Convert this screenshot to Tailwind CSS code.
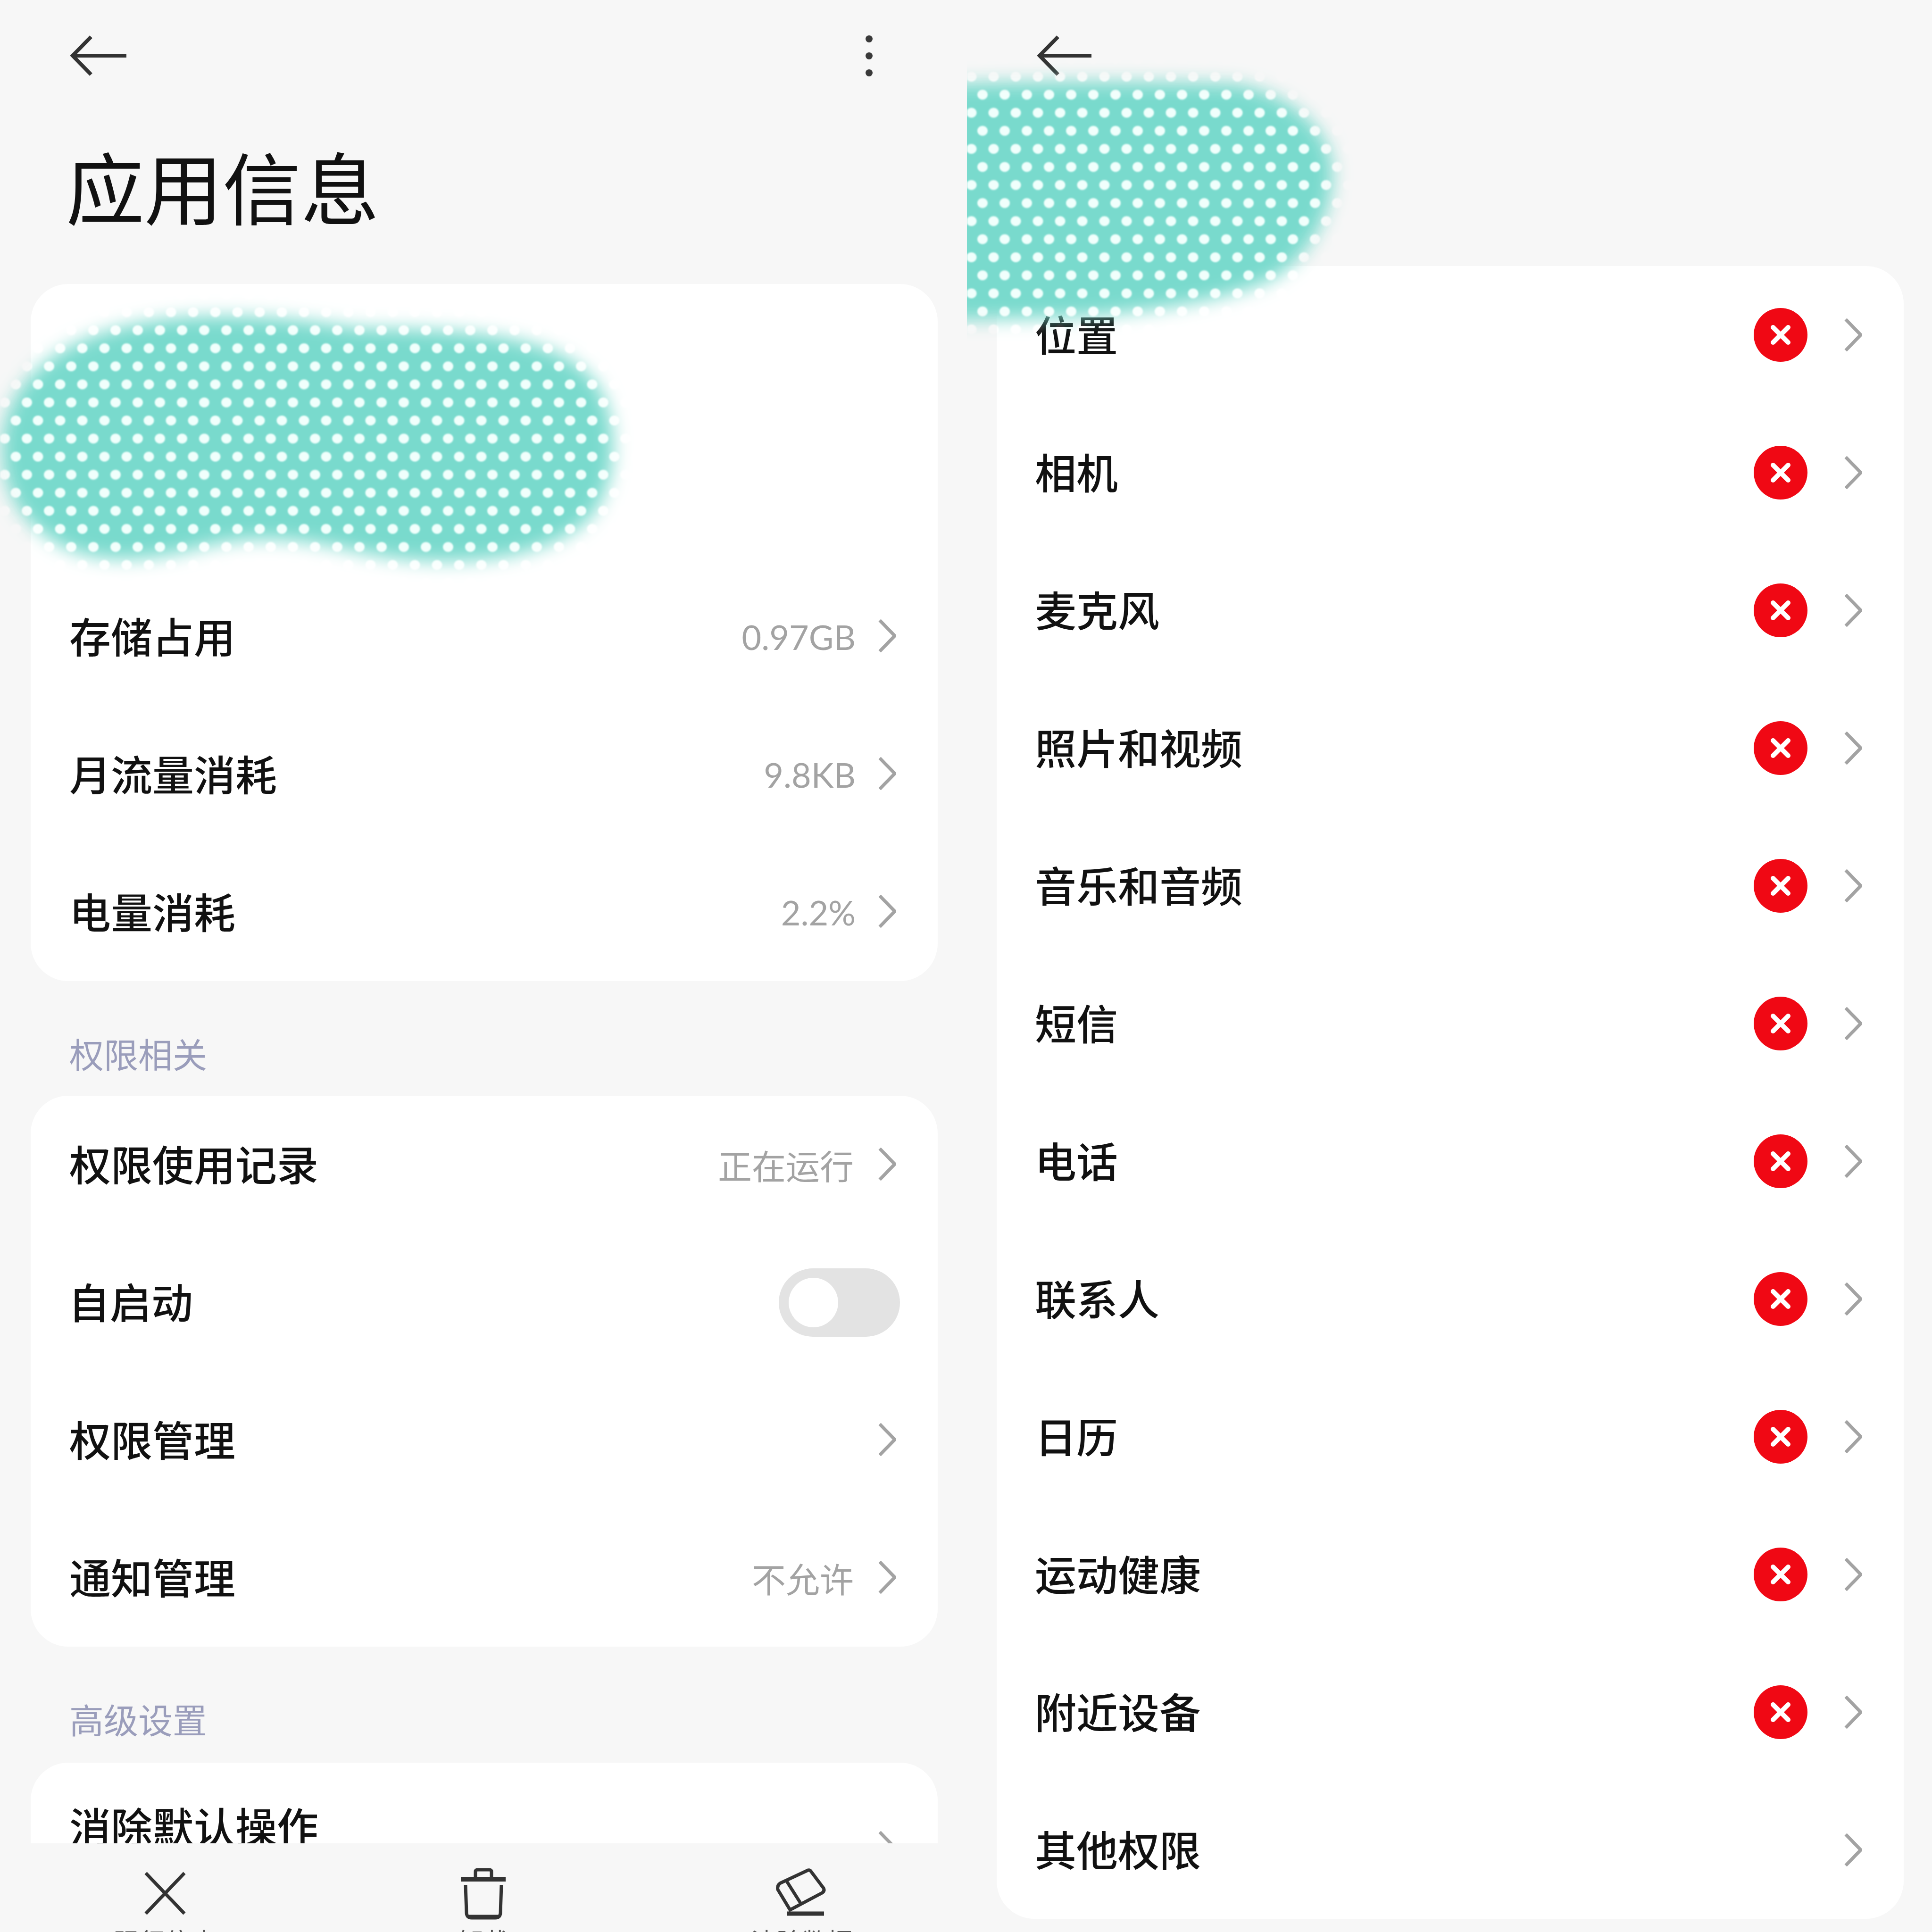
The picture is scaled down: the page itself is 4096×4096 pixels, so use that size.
<!DOCTYPE html>
<html lang="zh-CN">
<head>
<meta charset="utf-8">
<script src="https://cdn.jsdelivr.net/npm/@tailwindcss/browser@4"></script>
<title>应用信息</title>
</head>
<body class="m-0 bg-[#f7f7f7]">
<div class="flex w-[4096px] h-[4096px] overflow-hidden bg-[#f7f7f7] text-[#111] font-['Noto_Sans_CJK_SC','Noto_Sans',sans-serif]">

  <!-- LEFT -->
  <section class="relative w-[2050px] h-[4096px] shrink-0 flex flex-col overflow-hidden">
    <div class="h-[3908px] shrink-0 overflow-hidden">
      <header class="h-[236px] pl-[146px] pr-[200px] flex items-center justify-between">
        <svg class="w-[122px] h-[86px]" viewBox="0 0 122 86" fill="none" stroke="#333" stroke-width="8"><path d="M122 43H8M47 3 8 43l39 40"/></svg>
        <div class="flex flex-col gap-[21px]">
          <span class="block w-[15px] h-[15px] rounded-full bg-[#3a3a3a]"></span>
          <span class="block w-[15px] h-[15px] rounded-full bg-[#3a3a3a]"></span>
          <span class="block w-[15px] h-[15px] rounded-full bg-[#3a3a3a]"></span>
        </div>
      </header>
      <h1 class="h-[366px] pl-[140px] pt-[61px] text-[166px] leading-[190px] font-normal text-[#111]">应用信息</h1>

      <div class="ml-[65px] mr-[62px] bg-white rounded-[80px]">
        <div class="h-[602px]"></div>
        <div class="h-[292px] pl-[84px] pr-[88px] flex items-center justify-between">
          <span class="-mt-[8px] -ml-[2px] text-[88px] font-medium">存储占用</span>
          <div class="flex items-center gap-[48px]"><span class="text-[72px] text-[#a3a3a3] font-['Lato','Noto_Sans_CJK_SC',sans-serif]">0.97GB</span><svg class="w-[38px] h-[70px] -mt-[4px]" viewBox="0 0 38 70" fill="none" stroke="#a3a3a3" stroke-width="7"><path d="M3 2l32 33L3 68"/></svg></div>
        </div>
        <div class="h-[292px] pl-[84px] pr-[88px] flex items-center justify-between">
          <span class="-mt-[8px] -ml-[2px] text-[88px] font-medium">月流量消耗</span>
          <div class="flex items-center gap-[48px]"><span class="text-[72px] text-[#a3a3a3] font-['Lato','Noto_Sans_CJK_SC',sans-serif]">9.8KB</span><svg class="w-[38px] h-[70px] -mt-[4px]" viewBox="0 0 38 70" fill="none" stroke="#a3a3a3" stroke-width="7"><path d="M3 2l32 33L3 68"/></svg></div>
        </div>
        <div class="h-[292px] pl-[84px] pr-[88px] flex items-center justify-between">
          <span class="-mt-[8px] -ml-[2px] text-[88px] font-medium">电量消耗</span>
          <div class="flex items-center gap-[48px]"><span class="text-[72px] text-[#a3a3a3] font-['Lato','Noto_Sans_CJK_SC',sans-serif]">2.2%</span><svg class="w-[38px] h-[70px] -mt-[4px]" viewBox="0 0 38 70" fill="none" stroke="#a3a3a3" stroke-width="7"><path d="M3 2l32 33L3 68"/></svg></div>
        </div>
      </div>

      <div class="h-[243px] pl-[147px] pt-[116px] text-[73px] leading-[73px] text-[#9a9dbb]">权限相关</div>

      <div class="ml-[65px] mr-[62px] bg-white rounded-[80px]">
        <div class="h-[292px] pl-[84px] pr-[88px] flex items-center justify-between">
          <span class="-mt-[8px] -ml-[2px] text-[88px] font-medium">权限使用记录</span>
          <div class="flex items-center gap-[52px]"><span class="text-[72px] text-[#a3a3a3]">正在运行</span><svg class="w-[38px] h-[70px] -mt-[2px]" viewBox="0 0 38 70" fill="none" stroke="#a3a3a3" stroke-width="7"><path d="M3 2l32 33L3 68"/></svg></div>
        </div>
        <div class="h-[292px] pl-[84px] pr-[80px] flex items-center justify-between">
          <span class="-mt-[8px] -ml-[4px] text-[88px] font-medium">自启动</span>
          <div class="w-[257px] h-[145px] rounded-full bg-[#e3e3e3] flex items-center pl-[21px]"><span class="block w-[105px] h-[105px] rounded-full bg-white"></span></div>
        </div>
        <div class="h-[292px] pl-[84px] pr-[88px] flex items-center justify-between">
          <span class="-mt-[8px] -ml-[2px] text-[88px] font-medium">权限管理</span>
          <svg class="w-[38px] h-[70px] -mt-[2px]" viewBox="0 0 38 70" fill="none" stroke="#a3a3a3" stroke-width="7"><path d="M3 2l32 33L3 68"/></svg>
        </div>
        <div class="h-[292px] pl-[84px] pr-[88px] flex items-center justify-between">
          <span class="-mt-[8px] -ml-[2px] text-[88px] font-medium">通知管理</span>
          <div class="flex items-center gap-[52px]"><span class="text-[72px] text-[#a3a3a3]">不允许</span><svg class="w-[38px] h-[70px] -mt-[2px]" viewBox="0 0 38 70" fill="none" stroke="#a3a3a3" stroke-width="7"><path d="M3 2l32 33L3 68"/></svg></div>
        </div>
      </div>

      <div class="h-[246px] pl-[147px] pt-[116px] text-[73px] leading-[73px] text-[#9a9dbb]">高级设置</div>

      <div class="ml-[65px] mr-[62px] h-[400px] bg-white rounded-[80px] pl-[82px] pr-[88px] pt-[77px] flex items-start justify-between">
        <span class="text-[88px] leading-[110px] font-medium">消除默认操作</span>
        <svg class="w-[38px] h-[70px] mt-[68px]" viewBox="0 0 38 70" fill="none" stroke="#a3a3a3" stroke-width="7"><path d="M3 2l32 33L3 68"/></svg>
      </div>
    </div>

    <nav class="grid grid-cols-3 px-[12px] pt-[52px]">
      <div class="flex flex-col items-center">
        <svg class="w-[110px] h-[110px]" viewBox="0 0 110 110" fill="none" stroke="#333" stroke-width="7"><path d="M14 11l82 86M96 11 14 97"/></svg>
        <span class="mt-[18px] text-[54px] leading-none text-[#555]">强行停止</span>
      </div>
      <div class="flex flex-col items-center">
        <svg class="w-[110px] h-[110px]" viewBox="0 0 110 110" fill="none" stroke="#333" stroke-width="7"><path d="M7 24h95" stroke-width="10"/><path d="M38 20V8q0-4 5-4h24q5 0 5 4v12M17 36l2 60q1 10 11 10h50q10 0 11-10l2-60"/><path d="M22 103h66" stroke-width="7"/></svg>
        <span class="mt-[18px] text-[54px] leading-none text-[#555]">卸载</span>
      </div>
      <div class="flex flex-col items-center">
        <svg class="w-[110px] h-[110px] -ml-[8px]" viewBox="0 0 110 110" fill="none" stroke="#333" stroke-width="7"><path d="M72 5 14 32q-8 5-6 14l26 43 68-36q6-4 3-10L78 7q-2-3-6-2Z"/><path d="M26 27l31 49"/><path d="M28 97h78" stroke-width="9"/></svg>
        <span class="mt-[18px] text-[54px] leading-none text-[#555]">清除数据</span>
      </div>
    </nav>

    <!-- redaction blob -->
    <svg class="absolute left-0 top-0 w-[1400px] h-[1300px] pointer-events-none" viewBox="0 0 1400 1300">
      <defs>
        <filter id="blurL" filterUnits="userSpaceOnUse" x="-100" y="500" width="1600" height="900"><feGaussianBlur stdDeviation="19"/></filter>
        <filter id="softL" filterUnits="userSpaceOnUse" x="-100" y="500" width="1600" height="900"><feGaussianBlur stdDeviation="1.5"/></filter>
        <pattern id="dotsL" patternUnits="userSpaceOnUse" x="10" y="700" width="47" height="76.6">
          <ellipse cx="0" cy="0" rx="11" ry="10.5" fill="#f0fffc"/><ellipse cx="47" cy="0" rx="11" ry="10.5" fill="#f0fffc"/>
          <ellipse cx="0" cy="76.6" rx="11" ry="10.5" fill="#f0fffc"/><ellipse cx="47" cy="76.6" rx="11" ry="10.5" fill="#f0fffc"/>
          <ellipse cx="23.5" cy="38.3" rx="11" ry="10.5" fill="#f0fffc"/>
        </pattern>
        <mask id="maskL" maskUnits="userSpaceOnUse" x="0" y="0" width="1400" height="1300">
          <path filter="url(#blurL)" fill="#fff" d="M5 930C20 790 150 690 400 672C560 665 640 680 760 695C900 700 1190 690 1268 820C1318 900 1308 1050 1238 1110C1140 1190 950 1210 760 1170C650 1145 550 1130 430 1160C300 1195 170 1200 90 1130C20 1080 0 1000 5 930Z"/>
        </mask>
      </defs>
      <g mask="url(#maskL)"><rect x="0" y="600" width="1400" height="700" fill="#79dacd"/><rect x="0" y="600" width="1400" height="700" fill="url(#dotsL)" filter="url(#softL)"/></g>
    </svg>
  </section>

  <!-- RIGHT -->
  <section class="relative flex-1 h-[4096px] overflow-hidden">
    <header class="h-[236px] pl-[146px] flex items-center">
      <svg class="w-[122px] h-[86px]" viewBox="0 0 122 86" fill="none" stroke="#333" stroke-width="8"><path d="M118 43H8M47 3 8 43l39 40"/></svg>
    </header>
    <div class="mt-[328px] ml-[63px] mr-[60px] bg-white rounded-[80px]">
      <div class="h-[292px] pl-[84px] pr-[88px] flex items-center">
        <span class="flex-1 -mt-[8px] -ml-[3px] text-[88px] font-medium">位置</span>
        <span class="flex items-center justify-center w-[114px] h-[114px] rounded-full bg-[#f00814]"><svg class="w-[44px] h-[44px]" viewBox="0 0 44 44" stroke="#fff" stroke-width="10" stroke-linecap="round"><path d="M6 6l32 32M38 6 6 38"/></svg></span>
        <svg class="ml-[78px] w-[38px] h-[70px]" viewBox="0 0 38 70" fill="none" stroke="#a3a3a3" stroke-width="7"><path d="M3 2l32 33L3 68"/></svg>
      </div>
      <div class="h-[292px] pl-[84px] pr-[88px] flex items-center">
        <span class="flex-1 -mt-[8px] -ml-[3px] text-[88px] font-medium">相机</span>
        <span class="flex items-center justify-center w-[114px] h-[114px] rounded-full bg-[#f00814]"><svg class="w-[44px] h-[44px]" viewBox="0 0 44 44" stroke="#fff" stroke-width="10" stroke-linecap="round"><path d="M6 6l32 32M38 6 6 38"/></svg></span>
        <svg class="ml-[78px] w-[38px] h-[70px]" viewBox="0 0 38 70" fill="none" stroke="#a3a3a3" stroke-width="7"><path d="M3 2l32 33L3 68"/></svg>
      </div>
      <div class="h-[292px] pl-[84px] pr-[88px] flex items-center">
        <span class="flex-1 -mt-[8px] -ml-[3px] text-[88px] font-medium">麦克风</span>
        <span class="flex items-center justify-center w-[114px] h-[114px] rounded-full bg-[#f00814]"><svg class="w-[44px] h-[44px]" viewBox="0 0 44 44" stroke="#fff" stroke-width="10" stroke-linecap="round"><path d="M6 6l32 32M38 6 6 38"/></svg></span>
        <svg class="ml-[78px] w-[38px] h-[70px]" viewBox="0 0 38 70" fill="none" stroke="#a3a3a3" stroke-width="7"><path d="M3 2l32 33L3 68"/></svg>
      </div>
      <div class="h-[292px] pl-[84px] pr-[88px] flex items-center">
        <span class="flex-1 -mt-[8px] -ml-[3px] text-[88px] font-medium">照片和视频</span>
        <span class="flex items-center justify-center w-[114px] h-[114px] rounded-full bg-[#f00814]"><svg class="w-[44px] h-[44px]" viewBox="0 0 44 44" stroke="#fff" stroke-width="10" stroke-linecap="round"><path d="M6 6l32 32M38 6 6 38"/></svg></span>
        <svg class="ml-[78px] w-[38px] h-[70px]" viewBox="0 0 38 70" fill="none" stroke="#a3a3a3" stroke-width="7"><path d="M3 2l32 33L3 68"/></svg>
      </div>
      <div class="h-[292px] pl-[84px] pr-[88px] flex items-center">
        <span class="flex-1 -mt-[8px] -ml-[3px] text-[88px] font-medium">音乐和音频</span>
        <span class="flex items-center justify-center w-[114px] h-[114px] rounded-full bg-[#f00814]"><svg class="w-[44px] h-[44px]" viewBox="0 0 44 44" stroke="#fff" stroke-width="10" stroke-linecap="round"><path d="M6 6l32 32M38 6 6 38"/></svg></span>
        <svg class="ml-[78px] w-[38px] h-[70px]" viewBox="0 0 38 70" fill="none" stroke="#a3a3a3" stroke-width="7"><path d="M3 2l32 33L3 68"/></svg>
      </div>
      <div class="h-[292px] pl-[84px] pr-[88px] flex items-center">
        <span class="flex-1 -mt-[8px] -ml-[3px] text-[88px] font-medium">短信</span>
        <span class="flex items-center justify-center w-[114px] h-[114px] rounded-full bg-[#f00814]"><svg class="w-[44px] h-[44px]" viewBox="0 0 44 44" stroke="#fff" stroke-width="10" stroke-linecap="round"><path d="M6 6l32 32M38 6 6 38"/></svg></span>
        <svg class="ml-[78px] w-[38px] h-[70px]" viewBox="0 0 38 70" fill="none" stroke="#a3a3a3" stroke-width="7"><path d="M3 2l32 33L3 68"/></svg>
      </div>
      <div class="h-[292px] pl-[84px] pr-[88px] flex items-center">
        <span class="flex-1 -mt-[8px] -ml-[3px] text-[88px] font-medium">电话</span>
        <span class="flex items-center justify-center w-[114px] h-[114px] rounded-full bg-[#f00814]"><svg class="w-[44px] h-[44px]" viewBox="0 0 44 44" stroke="#fff" stroke-width="10" stroke-linecap="round"><path d="M6 6l32 32M38 6 6 38"/></svg></span>
        <svg class="ml-[78px] w-[38px] h-[70px]" viewBox="0 0 38 70" fill="none" stroke="#a3a3a3" stroke-width="7"><path d="M3 2l32 33L3 68"/></svg>
      </div>
      <div class="h-[292px] pl-[84px] pr-[88px] flex items-center">
        <span class="flex-1 -mt-[8px] -ml-[3px] text-[88px] font-medium">联系人</span>
        <span class="flex items-center justify-center w-[114px] h-[114px] rounded-full bg-[#f00814]"><svg class="w-[44px] h-[44px]" viewBox="0 0 44 44" stroke="#fff" stroke-width="10" stroke-linecap="round"><path d="M6 6l32 32M38 6 6 38"/></svg></span>
        <svg class="ml-[78px] w-[38px] h-[70px]" viewBox="0 0 38 70" fill="none" stroke="#a3a3a3" stroke-width="7"><path d="M3 2l32 33L3 68"/></svg>
      </div>
      <div class="h-[292px] pl-[84px] pr-[88px] flex items-center">
        <span class="flex-1 -mt-[8px] -ml-[3px] text-[88px] font-medium">日历</span>
        <span class="flex items-center justify-center w-[114px] h-[114px] rounded-full bg-[#f00814]"><svg class="w-[44px] h-[44px]" viewBox="0 0 44 44" stroke="#fff" stroke-width="10" stroke-linecap="round"><path d="M6 6l32 32M38 6 6 38"/></svg></span>
        <svg class="ml-[78px] w-[38px] h-[70px]" viewBox="0 0 38 70" fill="none" stroke="#a3a3a3" stroke-width="7"><path d="M3 2l32 33L3 68"/></svg>
      </div>
      <div class="h-[292px] pl-[84px] pr-[88px] flex items-center">
        <span class="flex-1 -mt-[8px] -ml-[3px] text-[88px] font-medium">运动健康</span>
        <span class="flex items-center justify-center w-[114px] h-[114px] rounded-full bg-[#f00814]"><svg class="w-[44px] h-[44px]" viewBox="0 0 44 44" stroke="#fff" stroke-width="10" stroke-linecap="round"><path d="M6 6l32 32M38 6 6 38"/></svg></span>
        <svg class="ml-[78px] w-[38px] h-[70px]" viewBox="0 0 38 70" fill="none" stroke="#a3a3a3" stroke-width="7"><path d="M3 2l32 33L3 68"/></svg>
      </div>
      <div class="h-[292px] pl-[84px] pr-[88px] flex items-center">
        <span class="flex-1 -mt-[8px] -ml-[3px] text-[88px] font-medium">附近设备</span>
        <span class="flex items-center justify-center w-[114px] h-[114px] rounded-full bg-[#f00814]"><svg class="w-[44px] h-[44px]" viewBox="0 0 44 44" stroke="#fff" stroke-width="10" stroke-linecap="round"><path d="M6 6l32 32M38 6 6 38"/></svg></span>
        <svg class="ml-[78px] w-[38px] h-[70px]" viewBox="0 0 38 70" fill="none" stroke="#a3a3a3" stroke-width="7"><path d="M3 2l32 33L3 68"/></svg>
      </div>
      <div class="h-[292px] pl-[84px] pr-[88px] flex items-center">
        <span class="flex-1 -mt-[8px] -ml-[3px] text-[88px] font-medium">其他权限</span>
        <svg class="ml-[78px] w-[38px] h-[70px]" viewBox="0 0 38 70" fill="none" stroke="#a3a3a3" stroke-width="7"><path d="M3 2l32 33L3 68"/></svg>
      </div>
    </div>

    <!-- redaction blob -->
    <svg class="absolute left-0 top-0 w-[1000px] h-[800px] pointer-events-none" viewBox="2050 0 1000 800">
      <defs>
        <filter id="blurR" filterUnits="userSpaceOnUse" x="1800" y="0" width="1300" height="900"><feGaussianBlur stdDeviation="19"/></filter>
        <filter id="softR" filterUnits="userSpaceOnUse" x="1800" y="0" width="1300" height="900"><feGaussianBlur stdDeviation="1.5"/></filter>
        <pattern id="dotsR" patternUnits="userSpaceOnUse" x="2083" y="200.7" width="47" height="76.6">
          <ellipse cx="0" cy="0" rx="11" ry="10.5" fill="#f0fffc"/><ellipse cx="47" cy="0" rx="11" ry="10.5" fill="#f0fffc"/>
          <ellipse cx="0" cy="76.6" rx="11" ry="10.5" fill="#f0fffc"/><ellipse cx="47" cy="76.6" rx="11" ry="10.5" fill="#f0fffc"/>
          <ellipse cx="23.5" cy="38.3" rx="11" ry="10.5" fill="#f0fffc"/>
        </pattern>
        <mask id="maskR" maskUnits="userSpaceOnUse" x="2050" y="0" width="1000" height="800">
          <path filter="url(#blurR)" fill="#fff" d="M1950 180C2200 170 2450 172 2620 178C2740 200 2825 280 2825 365C2825 450 2780 540 2700 590C2600 640 2400 670 2200 675L1950 680Z"/>
        </mask>
      </defs>
      <g mask="url(#maskR)"><rect x="2050" y="100" width="1000" height="700" fill="#79dacd"/><rect x="2050" y="100" width="1000" height="700" fill="url(#dotsR)" filter="url(#softR)"/></g>
    </svg>
  </section>
</div>
</body>
</html>
